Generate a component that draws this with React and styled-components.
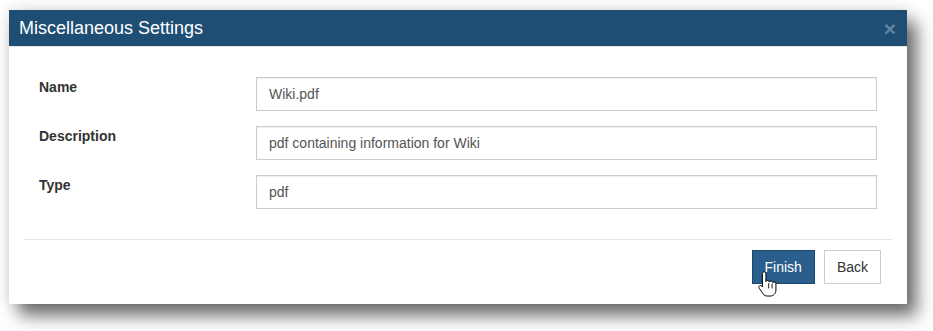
import styled, { createGlobalStyle } from "styled-components";

const GlobalStyle = createGlobalStyle`
    body {
        margin: 0;
        background: #ffffff;
        font-family: "Liberation Sans", Arial, sans-serif;
    }
`;

const Page = styled.div`
    padding: 10px 0 30px 9px;
`;

const Modal = styled.div`
    position: relative;
    width: 898px;
    height: 294px;
    background: #ffffff;
    display: flex;
    flex-direction: column;
    box-shadow: 0 0 14px rgba(0, 0, 0, 0.14), 10px 12px 16px rgba(0, 0, 0, 0.55);
`;

const Header = styled.div`
    height: 36px;
    background: #1f4e74;
    border-bottom: 1px solid #e5e5e5;
    display: flex;
    align-items: center;
    justify-content: space-between;
    padding: 0 10px;
`;

const Title = styled.h4`
    margin: 0;
    font-size: 18px;
    font-weight: normal;
    color: #ffffff;
`;

const Close = styled.span`
    font-size: 21px;
    font-weight: bold;
    color: #ffffff;
    opacity: 0.3;
    line-height: 1;
    margin-right: 1px;
`;

const Body = styled.div`
    padding: 30px;
    display: flex;
    flex-direction: column;
    gap: 15px;
`;

const Row = styled.div`
    display: flex;
    align-items: flex-start;
`;

const Label = styled.label`
    width: 217px;
    font-size: 14px;
    font-weight: bold;
    color: #333333;
    line-height: 20px;
`;

const Input = styled.input`
    flex: 1;
    height: 34px;
    box-sizing: border-box;
    border: 1px solid #cccccc;
    border-radius: 0;
    padding: 0 12px;
    font-family: "Liberation Sans", Arial, sans-serif;
    font-size: 14px;
    color: #555555;
    box-shadow: inset 0 1px 1px rgba(0, 0, 0, 0.075);
    outline: none;
`;

const Footer = styled.div`
    margin: 0 15px;
    border-top: 1px solid #e5e5e5;
    padding: 10px 11px 0 0;
    display: flex;
    justify-content: flex-end;
    gap: 9px;
`;

const Button = styled.button`
    position: relative;
    height: 34px;
    padding: 0 12px;
    font-family: "Liberation Sans", Arial, sans-serif;
    font-size: 14px;
    border-radius: 0;
    border: 1px solid ${p => (p.$primary ? "#1c4a6e" : "#cccccc")};
    background: ${p => (p.$primary ? "#2a5e8c" : "#ffffff")};
    color: ${p => (p.$primary ? "#ffffff" : "#333333")};
`;

const Cursor = styled.svg`
    position: absolute;
    left: 4px;
    top: 19px;
    width: 22px;
    height: 29px;
`;

function HandCursor() {
    return (
        <Cursor viewBox="0 0 20 26">
            <path
                d="M6.5 1.5c1 0 1.6.7 1.6 1.6v7.2c.3-.6.9-.9 1.5-.9.9 0 1.5.6 1.6 1.3.3-.5.9-.8 1.5-.8.9 0 1.5.6 1.6 1.4.3-.4.8-.6 1.3-.6 1 0 1.6.8 1.6 1.7v5.6c0 3.1-2.2 5.5-5.2 5.5H9.3c-1.6 0-2.8-.7-3.8-2L2 16.4c-.6-.8-.4-1.7.3-2.2.7-.5 1.6-.3 2.1.3l.5.7V3.1c0-.9.7-1.6 1.6-1.6z"
                fill="#ffffff"
                stroke="#000000"
                strokeWidth="0.9"
                strokeLinejoin="round"
            />
            <path d="M10.6 12.2v4M13.7 12.6v3.6" stroke="#000000" strokeWidth="0.8" strokeLinecap="round" />
        </Cursor>
    );
}

const fields = [
    { label: "Name", value: "Wiki.pdf" },
    { label: "Description", value: "pdf containing information for Wiki" },
    { label: "Type", value: "pdf" },
];

export default function App() {
    return (
        <Page>
            <GlobalStyle />
            <Modal>
                <Header>
                    <Title>Miscellaneous Settings</Title>
                    <Close>×</Close>
                </Header>
                <Body>
                    {fields.map(f => (
                        <Row key={f.label}>
                            <Label>{f.label}</Label>
                            <Input defaultValue={f.value} />
                        </Row>
                    ))}
                </Body>
                <Footer>
                    <Button $primary>
                        Finish
                        <HandCursor />
                    </Button>
                    <Button>Back</Button>
                </Footer>
            </Modal>
        </Page>
    );
}
